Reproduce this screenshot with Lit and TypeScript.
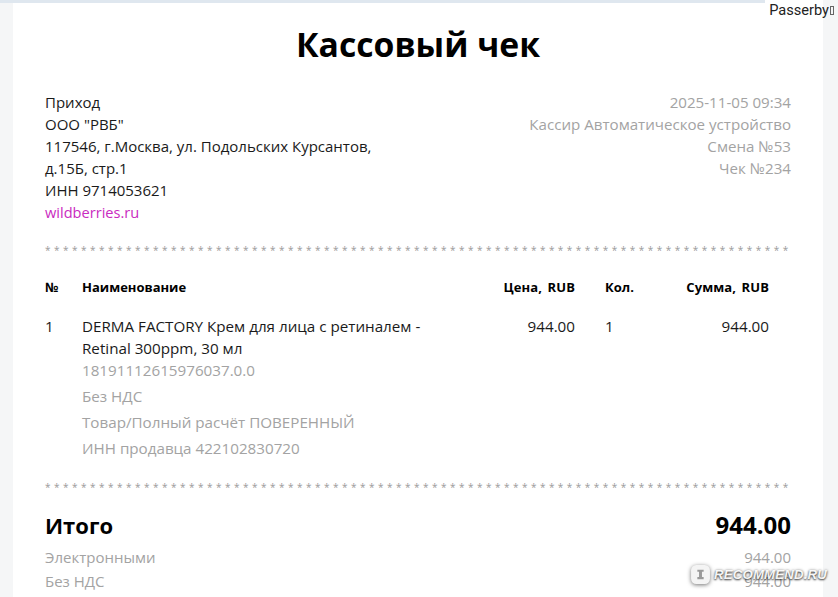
import { LitElement, html, css } from "lit";
import { customElement } from "lit/decorators.js";

@customElement("app-root")
export class AppRoot extends LitElement {
  static styles = css`
    :host {
      display: block;
      width: 838px;
      height: 597px;
      position: relative;
      overflow: hidden;
      background: #f5f6f7;
      font-family: "Open Sans", "Noto Sans", sans-serif;
      color: #1a1a1a;
      font-size: 15px;
      line-height: 22px;
    }
    .topbar { height: 3px; width: 765px; background: #dfe7ef; }
    .topbar-wrap { background: #fff; margin: 0 15px 0 0; }
    .card {
      margin: 0 15px 0 13px;
      background: #fff;
      height: 594px;
      padding: 0 32px;
      box-sizing: border-box;
      overflow: hidden;
    }
    h1 {
      margin: 0;
      padding-top: 19px;
      height: 68px;
      box-sizing: border-box;
      text-align: center;
      font-size: 33.7px;
      line-height: 44px;
      font-weight: 700;
      color: #000;
    }
    .head { display: flex; justify-content: space-between; padding-top: 20px; }
    .left { width: 345px; }
    .right { text-align: right; color: #a3a3a3; font-size: 15.12px; }
    .link { color: #c92bc0; font-size: 14.6px; }
    .stars {
      height: 14px;
      line-height: 14px;
      white-space: nowrap;
      font-size: 10px;
      letter-spacing: 3.49px;
      color: #9a9a9a;
    }
    .s1 { margin-top: 20px; }
    .grid {
      display: grid;
      grid-template-columns: 37px 385px 108px 30px 60px 104px 21px;
      font-size: 15.2px;
    }
    .th {
      font-weight: 700;
      font-size: 13px;
      word-spacing: 2px;
      color: #000;
      padding-top: 19px;
      height: 58px;
      box-sizing: border-box;
    }
    .th.r { letter-spacing: .1px; }
    .r { text-align: right; }
    .muted { color: #a3a3a3; }
    .meta { margin-top: -2px; }
    .meta div { line-height: 26px; }
    .name { width: 345px; }
    .s2 { margin-top: 19px; }
    .total {
      display: flex;
      justify-content: space-between;
      align-items: baseline;
      font-weight: 700;
      color: #000;
      line-height: 30px;
      padding-top: 16px;
    }
    .total-label { font-size: 22px; }
    .total-value { font-size: 24px; }
    .pay { display: flex; justify-content: space-between; color: #a3a3a3; line-height: 24px; }
    .pay-list { padding-top: 5px; }
    .user {
      position: absolute; right: 4px; top: 1px;
      font-family: Roboto, sans-serif; font-size: 14.6px; line-height: 18px; color: #222;
      display: flex; align-items: center;
    }
    .tofu { display: inline-block; width: 4px; height: 9px; border: 1px solid #666; box-sizing: border-box; margin-left: 1px; }
    .wm {
      position: absolute; left: 690px; top: 564px;
      display: flex; align-items: center; gap: 3px;
      font-family: "Liberation Sans", sans-serif;
      font-weight: 700; font-style: italic; font-size: 13.2px; line-height: 16px;
      color: rgba(255,255,255,.95);
      text-shadow: 0 1px 2px rgba(0,0,0,.75), 0 0 3px rgba(0,0,0,.4);
      letter-spacing: .2px;
    }
    .wm svg { filter: drop-shadow(0 1px 2px rgba(0,0,0,.55)); }
  `;

  render() {
    const stars = "*".repeat(83);
    return html`
      <div class="topbar-wrap"><div class="topbar"></div></div>
      <div class="card">
        <h1>Кассовый чек</h1>
        <div class="head">
          <div class="left">
            <div>Приход</div>
            <div>ООО "РВБ"</div>
            <div>117546, г.Москва, ул. Подольских Курсантов, д.15Б, стр.1</div>
            <div>ИНН 9714053621</div>
            <div class="link">wildberries.ru</div>
          </div>
          <div class="right">
            <div>2025-11-05 09:34</div>
            <div>Кассир Автоматическое устройство</div>
            <div>Смена №53</div>
            <div>Чек №234</div>
          </div>
        </div>
        <div class="stars s1">${stars}</div>
        <div class="grid">
          <div class="th">№</div>
          <div class="th">Наименование</div>
          <div class="th r">Цена, RUB</div>
          <div class="th"></div>
          <div class="th">Кол.</div>
          <div class="th r">Сумма, RUB</div>
          <div class="th"></div>

          <div>1</div>
          <div>
            <div class="name">DERMA FACTORY Крем для лица с ретиналем - Retinal 300ppm, 30 мл</div>
            <div class="meta muted">
              <div>18191112615976037.0.0</div>
              <div>Без НДС</div>
              <div>Товар/Полный расчёт ПОВЕРЕННЫЙ</div>
              <div>ИНН продавца 422102830720</div>
            </div>
          </div>
          <div class="r">944.00</div>
          <div></div>
          <div>1</div>
          <div class="r">944.00</div>
          <div></div>
        </div>
        <div class="stars s2">${stars}</div>
        <div class="total"><span class="total-label">Итого</span><span class="total-value">944.00</span></div>
        <div class="pay-list">
          <div class="pay"><span>Электронными</span><span>944.00</span></div>
          <div class="pay"><span>Без НДС</span><span>944.00</span></div>
        </div>
      </div>
      <div class="user">Passerby<span class="tofu"></span></div>
      <div class="wm">
        <svg width="21" height="21" viewBox="0 0 20 20"><rect x="1" y="1" width="18" height="18" rx="5" fill="#f4f4f4"/><path d="M7 5.5h6v2h-1.6v5H13v2H7v-2h1.6v-5H7z" fill="#9a9a9a"/></svg>
        <span>RECOMMEND.RU</span>
      </div>
    `;
  }
}
